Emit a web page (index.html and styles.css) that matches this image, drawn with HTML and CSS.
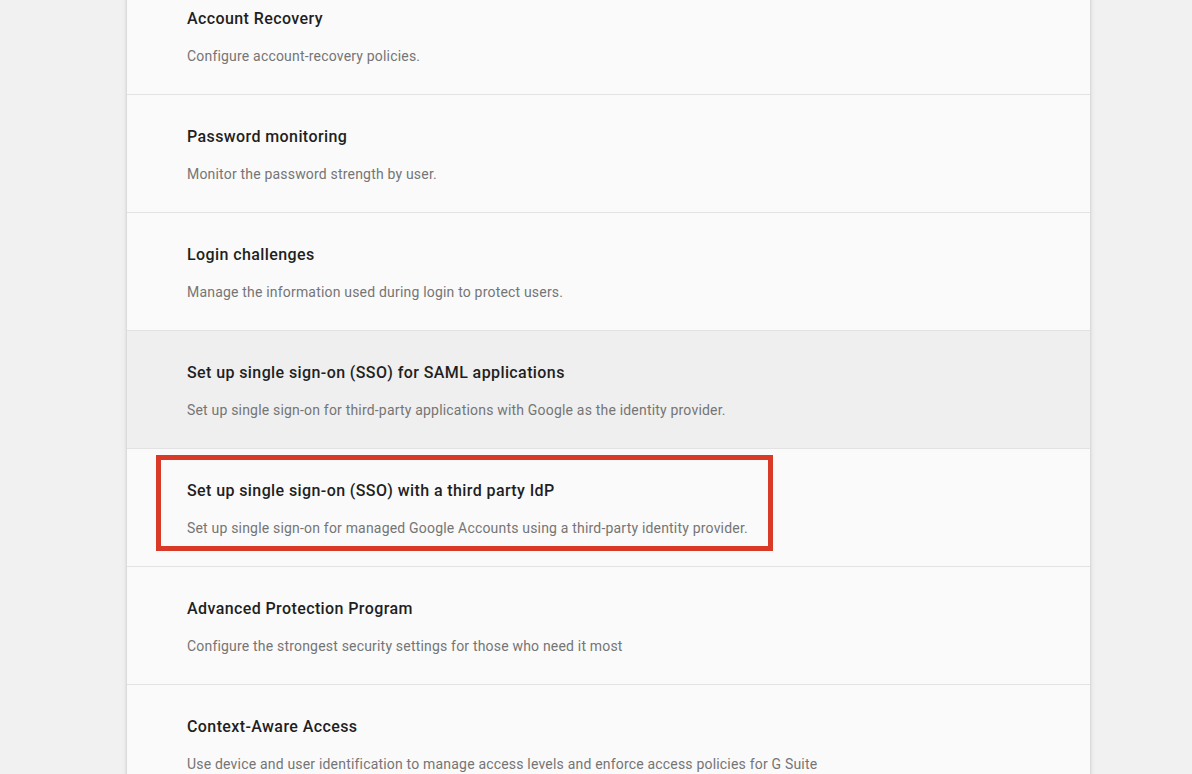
FILE: index.html
```html
<!DOCTYPE html>
<html>
<head>
<meta charset="utf-8">
<link rel="stylesheet" href="styles.css">
</head>
<body>
<div class="card">
  <div class="row">
    <div class="title">Account Recovery</div>
    <div class="desc">Configure account-recovery policies.</div>
  </div>
  <div class="row">
    <div class="title">Password monitoring</div>
    <div class="desc">Monitor the password strength by user.</div>
  </div>
  <div class="row">
    <div class="title">Login challenges</div>
    <div class="desc">Manage the information used during login to protect users.</div>
  </div>
  <div class="row hover">
    <div class="title">Set up single sign-on (SSO) for SAML applications</div>
    <div class="desc">Set up single sign-on for third-party applications with Google as the identity provider.</div>
  </div>
  <div class="row marked">
    <div class="title">Set up single sign-on (SSO) with a third party IdP</div>
    <div class="desc">Set up single sign-on for managed Google Accounts using a third-party identity provider.</div>
    <div class="highlight"></div>
  </div>
  <div class="row">
    <div class="title">Advanced Protection Program</div>
    <div class="desc">Configure the strongest security settings for those who need it most</div>
  </div>
  <div class="row">
    <div class="title">Context-Aware Access</div>
    <div class="desc">Use device and user identification to manage access levels and enforce access policies for G Suite</div>
  </div>
</div>
</body>
</html>
```
FILE: styles.css
```css
html, body {
  margin: 0;
  padding: 0;
  background: #f1f1f1;
  font-family: Roboto, "Liberation Sans", sans-serif;
  overflow: hidden;
  height: 774px;
}
.card {
  width: 963px;
  margin: -23px 0 0 127px;
  background: #fafafa;
  box-shadow: 0 0 3px rgba(0,0,0,0.18), 0 0 8px rgba(0,0,0,0.06);
}
.row {
  position: relative;
  padding: 32px 60px 28px 60px;
  border-bottom: 1px solid #e2e2e2;
  height: 57px;
}
.row.hover {
  background: #efefef;
}
.title {
  font-size: 16px;
  line-height: 20px;
  font-weight: 500;
  color: #1f1f1f;
  letter-spacing: 0.4px;
}
.desc {
  margin-top: 17px;
  font-size: 14px;
  line-height: 20px;
  color: #757575;
  letter-spacing: 0.19px;
  white-space: nowrap;
}
.highlight {
  position: absolute;
  left: 29px;
  top: 6px;
  width: 607px;
  height: 86px;
  border: 5px solid #d93a27;
}
```
